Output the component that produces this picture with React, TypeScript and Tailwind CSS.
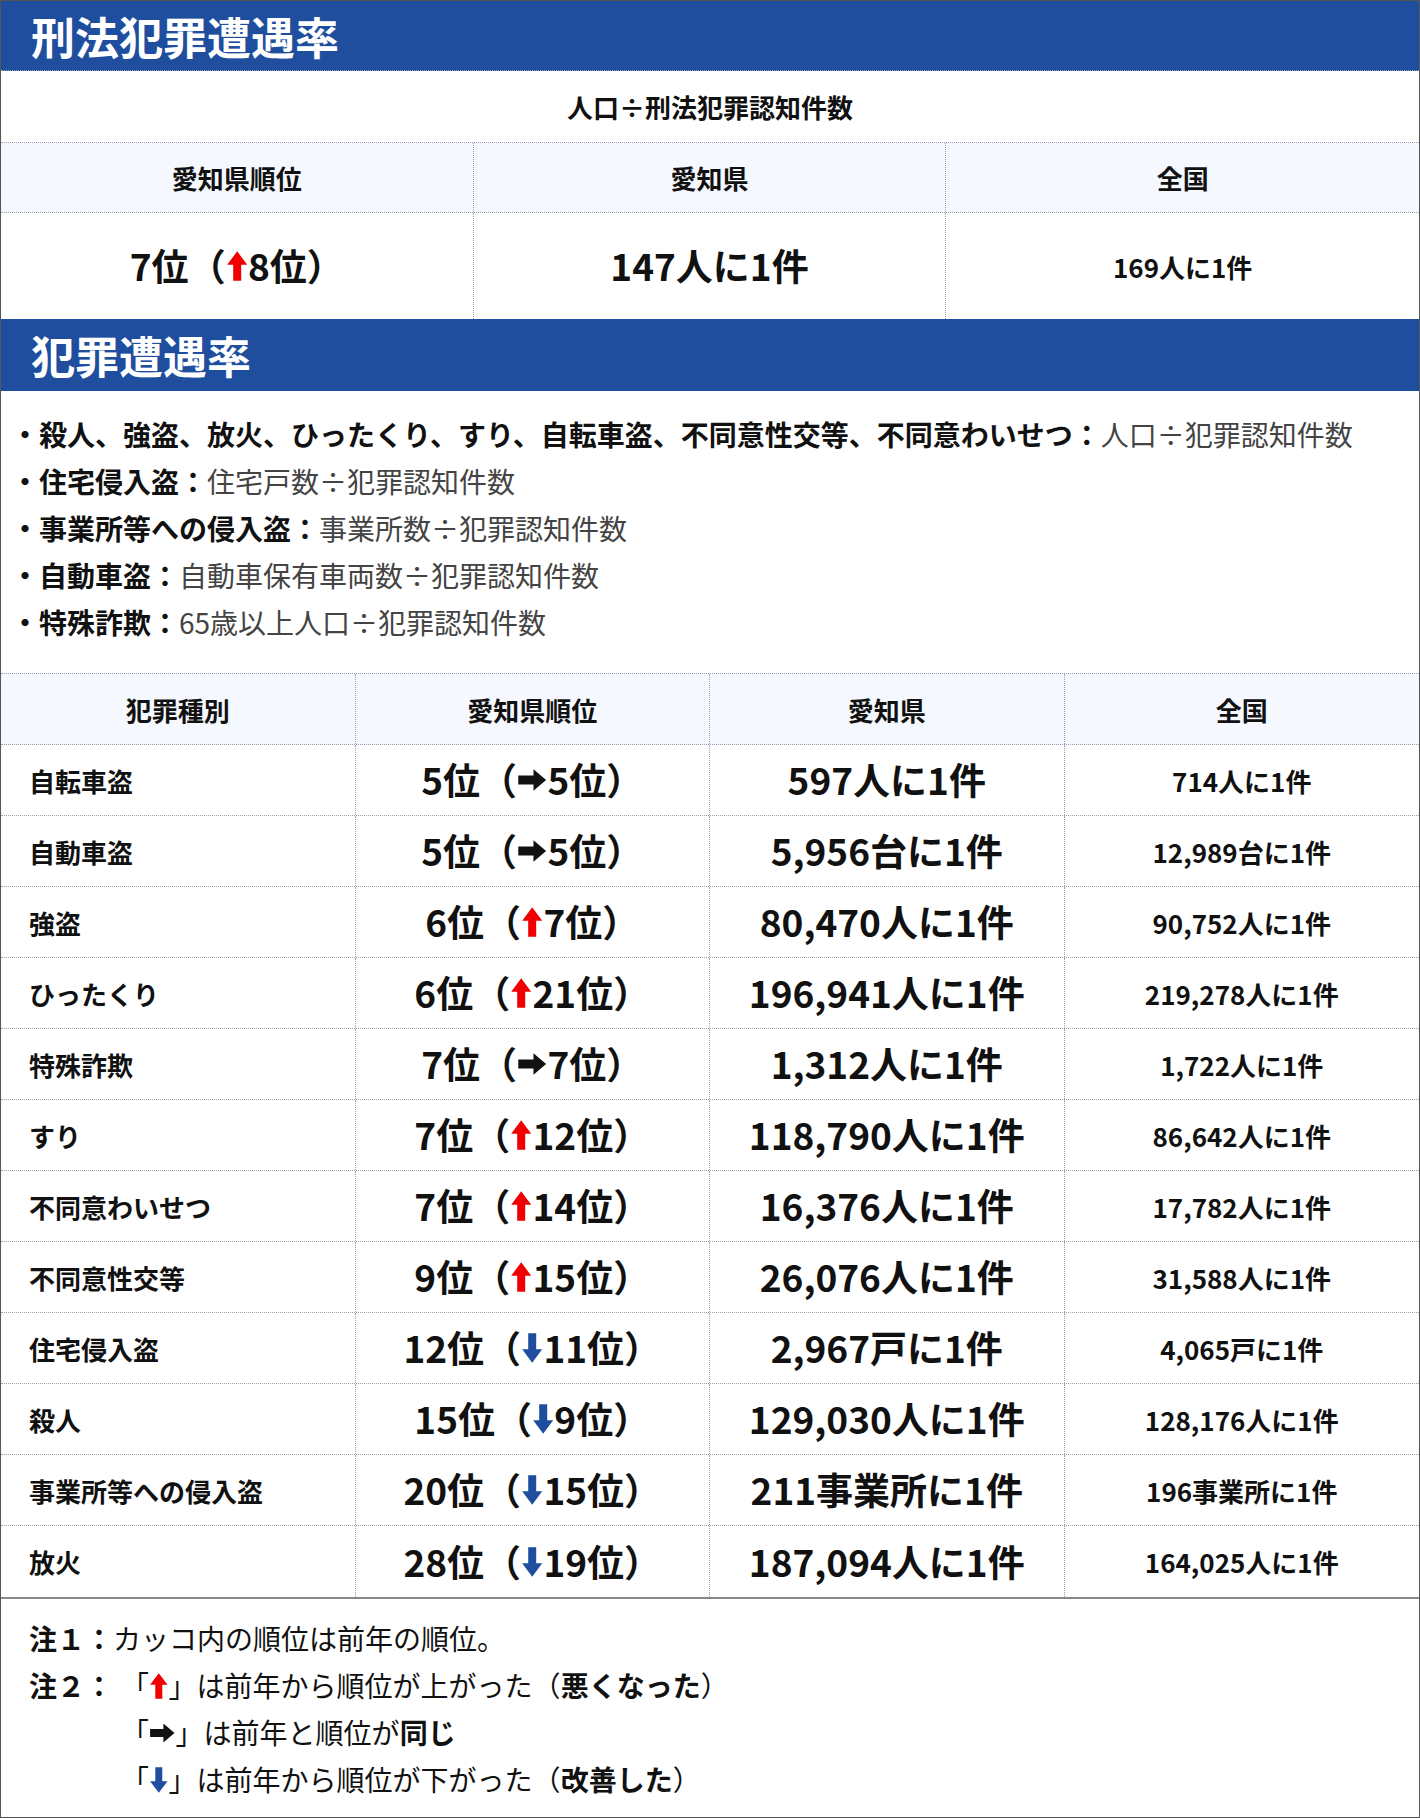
const font = { fontFamily: '"Noto Sans CJK JP", "Noto Sans", sans-serif' };

function Arrow({ dir, size = 32 }: { dir: "up" | "right" | "down"; size?: number }) {
  if (dir === "right")
    return (
      <svg width={size * 0.95} height={size} viewBox="0 0 24 24" className="inline-block align-middle">
        <path d="M1 8.5h12V3.5l10 8.5-10 8.5v-5H1z" fill="#111" />
      </svg>
    );
  const fill = dir === "up" ? "#f00000" : "#1f4e9f";
  return (
    <svg width={size * 0.7} height={size} viewBox="0 0 16 24" className="inline-block align-middle" style={{ transform: dir === "down" ? "rotate(180deg)" : undefined }}>
      <path d="M8 1l7.5 10H11v12H5V11H.5z" fill={fill} />
    </svg>
  );
}

const rows: [string, string, "up" | "right" | "down", string, string, string][] = [
  ["自転車盗", "5位", "right", "5位", "597人に1件", "714人に1件"],
  ["自動車盗", "5位", "right", "5位", "5,956台に1件", "12,989台に1件"],
  ["強盗", "6位", "up", "7位", "80,470人に1件", "90,752人に1件"],
  ["ひったくり", "6位", "up", "21位", "196,941人に1件", "219,278人に1件"],
  ["特殊詐欺", "7位", "right", "7位", "1,312人に1件", "1,722人に1件"],
  ["すり", "7位", "up", "12位", "118,790人に1件", "86,642人に1件"],
  ["不同意わいせつ", "7位", "up", "14位", "16,376人に1件", "17,782人に1件"],
  ["不同意性交等", "9位", "up", "15位", "26,076人に1件", "31,588人に1件"],
  ["住宅侵入盗", "12位", "down", "11位", "2,967戸に1件", "4,065戸に1件"],
  ["殺人", "15位", "down", "9位", "129,030人に1件", "128,176人に1件"],
  ["事業所等への侵入盗", "20位", "down", "15位", "211事業所に1件", "196事業所に1件"],
  ["放火", "28位", "down", "19位", "187,094人に1件", "164,025人に1件"],
];

const bullets: [string, string][] = [
  ["殺人、強盗、放火、ひったくり、すり、自転車盗、不同意性交等、不同意わいせつ：", "人口÷犯罪認知件数"],
  ["住宅侵入盗：", "住宅戸数÷犯罪認知件数"],
  ["事業所等への侵入盗：", "事業所数÷犯罪認知件数"],
  ["自動車盗：", "自動車保有車両数÷犯罪認知件数"],
  ["特殊詐欺：", "65歳以上人口÷犯罪認知件数"],
];

function Rank({ a, d, b }: { a: string; d: "up" | "right" | "down"; b: string }) {
  return (
    <span className="inline-flex items-center">
      {a}（<Arrow dir={d} />
      {b}）
    </span>
  );
}

export default function App() {
  const cell = "flex items-center justify-center border-dotted border-gray-400";
  return (
    <div style={font} className="w-[1420px] h-[1818px] border border-[#555] bg-white text-[#111] overflow-hidden">
      <div className="h-[70px] bg-[#1f4e9f] text-white font-bold text-[44px] pl-[30px] flex items-center border-b border-dotted border-gray-400">刑法犯罪遭遇率</div>
      <div className="h-[72px] flex items-center justify-center font-bold text-[26px] border-b border-dotted border-gray-400">人口÷刑法犯罪認知件数</div>
      <div className="grid grid-cols-3 h-[70px] bg-[#f5f8fe] font-bold text-[26px] border-b border-dotted border-gray-400">
        <div className={cell + " border-r"}>愛知県順位</div>
        <div className={cell + " border-r"}>愛知県</div>
        <div className={cell}>全国</div>
      </div>
      <div className="grid grid-cols-3 h-[106px] font-bold">
        <div className={cell + " border-r text-[37px]"}><Rank a="7位" d="up" b="8位" /></div>
        <div className={cell + " border-r text-[37px]"}>147人に1件</div>
        <div className={cell + " text-[26px]"}>169人に1件</div>
      </div>
      <div className="h-[72px] bg-[#1f4e9f] text-white font-bold text-[44px] pl-[30px] flex items-center">犯罪遭遇率</div>
      <div className="h-[282px] pl-[10px] pt-[20px] text-[28px] leading-[47px]">
        {bullets.map(([b, n]) => (
          <div key={b}>
            <span className="font-bold">・{b}</span>
            <span className="text-[#444]">{n}</span>
          </div>
        ))}
      </div>
      <div className="grid grid-cols-4 h-[72px] bg-[#f5f8fe] font-bold text-[26px] border-y border-dotted border-gray-400">
        <div className={cell + " border-r"}>犯罪種別</div>
        <div className={cell + " border-r"}>愛知県順位</div>
        <div className={cell + " border-r"}>愛知県</div>
        <div className={cell}>全国</div>
      </div>
      {rows.map(([name, a, d, b, v, n], i) => (
        <div key={name} className={"grid grid-cols-4 h-[71px] font-bold " + (i < rows.length - 1 ? "border-b border-dotted border-gray-400" : "")}>
          <div className="flex items-center pl-[28px] text-[26px] border-r border-dotted border-gray-400">{name}</div>
          <div className={cell + " border-r text-[37px]"}><Rank a={a} d={d} b={b} /></div>
          <div className={cell + " border-r text-[37px]"}>{v}</div>
          <div className={cell + " text-[26px]"}>{n}</div>
        </div>
      ))}
      <div className="border-t-2 border-[#888] pl-[28px] pt-[16px] text-[28px] leading-[47px]">
        <div><span className="font-bold">注１：</span>カッコ内の順位は前年の順位。</div>
        <div className="flex"><span className="font-bold w-[92px] shrink-0">注２：</span>
          <div>
            <div className="flex items-center">「<Arrow dir="up" size={28} />」は前年から順位が上がった（<b>悪くなった</b>）</div>
            <div className="flex items-center">「<Arrow dir="right" size={28} />」は前年と順位が<b>同じ</b></div>
            <div className="flex items-center">「<Arrow dir="down" size={28} />」は前年から順位が下がった（<b>改善した</b>）</div>
          </div>
        </div>
      </div>
    </div>
  );
}
